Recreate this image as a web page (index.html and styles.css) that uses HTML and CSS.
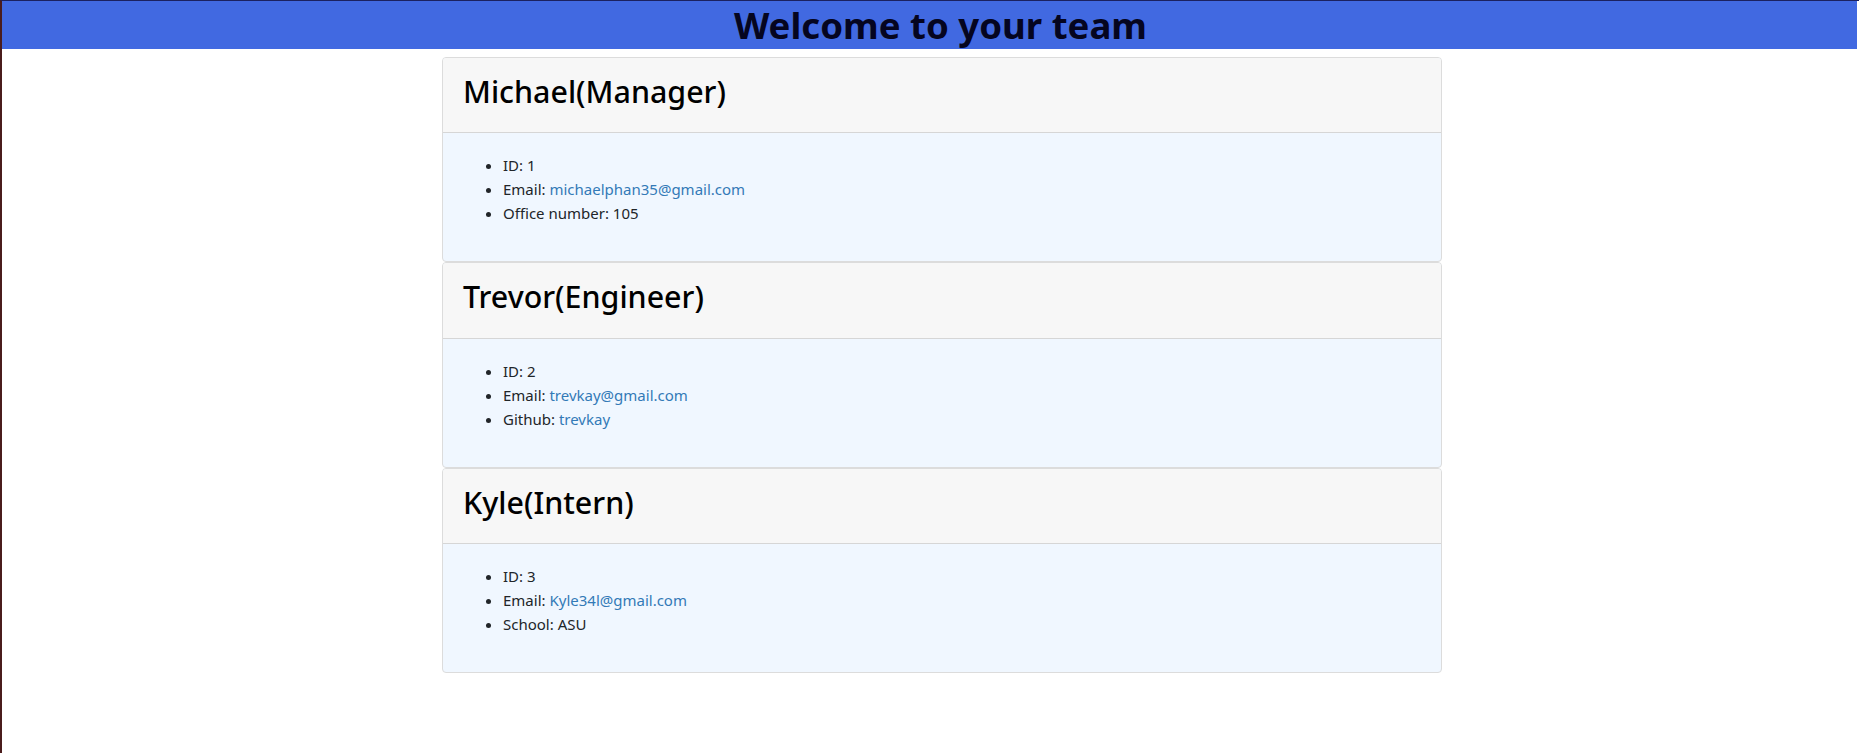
FILE: index.html
```html
<!DOCTYPE html>
<html lang="en">
<head>
<meta charset="utf-8">
<title>Team</title>
<link rel="stylesheet" href="styles.css">
</head>
<body>
<div class="frame">
  <header class="banner">
    <h1 class="banner-title">Welcome to your team</h1>
  </header>
  <main class="team">
    <section class="card">
      <div class="card-header"><h2 class="card-title">Michael(Manager)</h2></div>
      <div class="card-body">
        <ul class="info">
          <li>ID: 1</li>
          <li>Email: <a href="#">michaelphan35@gmail.com</a></li>
          <li>Office number: 105</li>
        </ul>
      </div>
    </section>
    <section class="card">
      <div class="card-header card-header-tall"><h2 class="card-title">Trevor(Engineer)</h2></div>
      <div class="card-body">
        <ul class="info">
          <li>ID: 2</li>
          <li>Email: <a href="#">trevkay@gmail.com</a></li>
          <li>Github: <a href="#">trevkay</a></li>
        </ul>
      </div>
    </section>
    <section class="card">
      <div class="card-header"><h2 class="card-title">Kyle(Intern)</h2></div>
      <div class="card-body">
        <ul class="info">
          <li>ID: 3</li>
          <li>Email: <a href="#">Kyle34l@gmail.com</a></li>
          <li>School: ASU</li>
        </ul>
      </div>
    </section>
  </main>
</div>
</body>
</html>
```

FILE: styles.css
```css
html, body {
  margin: 0;
  padding: 0;
  background: #fff;
}

body {
  font-family: "Noto Sans", "Open Sans", Arial, sans-serif;
  color: #212529;
  font-size: 15px;
  line-height: 24px;
}

.frame {
  min-height: 753px;
  box-sizing: border-box;
  border-top: 1px solid #1b2160;
  border-left: 2px solid #4a1c1c;
}

.banner {
  background: #4169e1;
  height: 48px;
  margin-right: 2px;
  padding-left: 22px;
  display: flex;
  justify-content: center;
}

.banner-title {
  margin: 0;
  font-size: 36.6px;
  font-weight: 700;
  line-height: 48px;
  color: #050520;
  white-space: nowrap;
}

.team {
  padding: 8px 0 0 23px;
  display: flex;
  flex-direction: column;
  align-items: center;
}

.card {
  width: 1000px;
  box-sizing: border-box;
  border: 1px solid #dcdcdc;
  border-radius: 4px;
  overflow: hidden;
  background: #f0f7ff;
}

.card-header {
  background: #f7f7f7;
  border-bottom: 1px solid #d6d6d6;
  padding: 12px 20px;
  height: 75px;
  box-sizing: border-box;
}

.card-header-tall {
  height: 76px;
}

.card-title {
  margin: 0;
  font-size: 30.4px;
  font-weight: 500;
  line-height: 44px;
  color: #000;
}

.card-body {
  padding: 20px;
  height: 128px;
  box-sizing: border-box;
}

.info {
  margin: 0;
  padding-left: 40px;
}

.info a {
  color: #337ab7;
  text-decoration: none;
}
```
